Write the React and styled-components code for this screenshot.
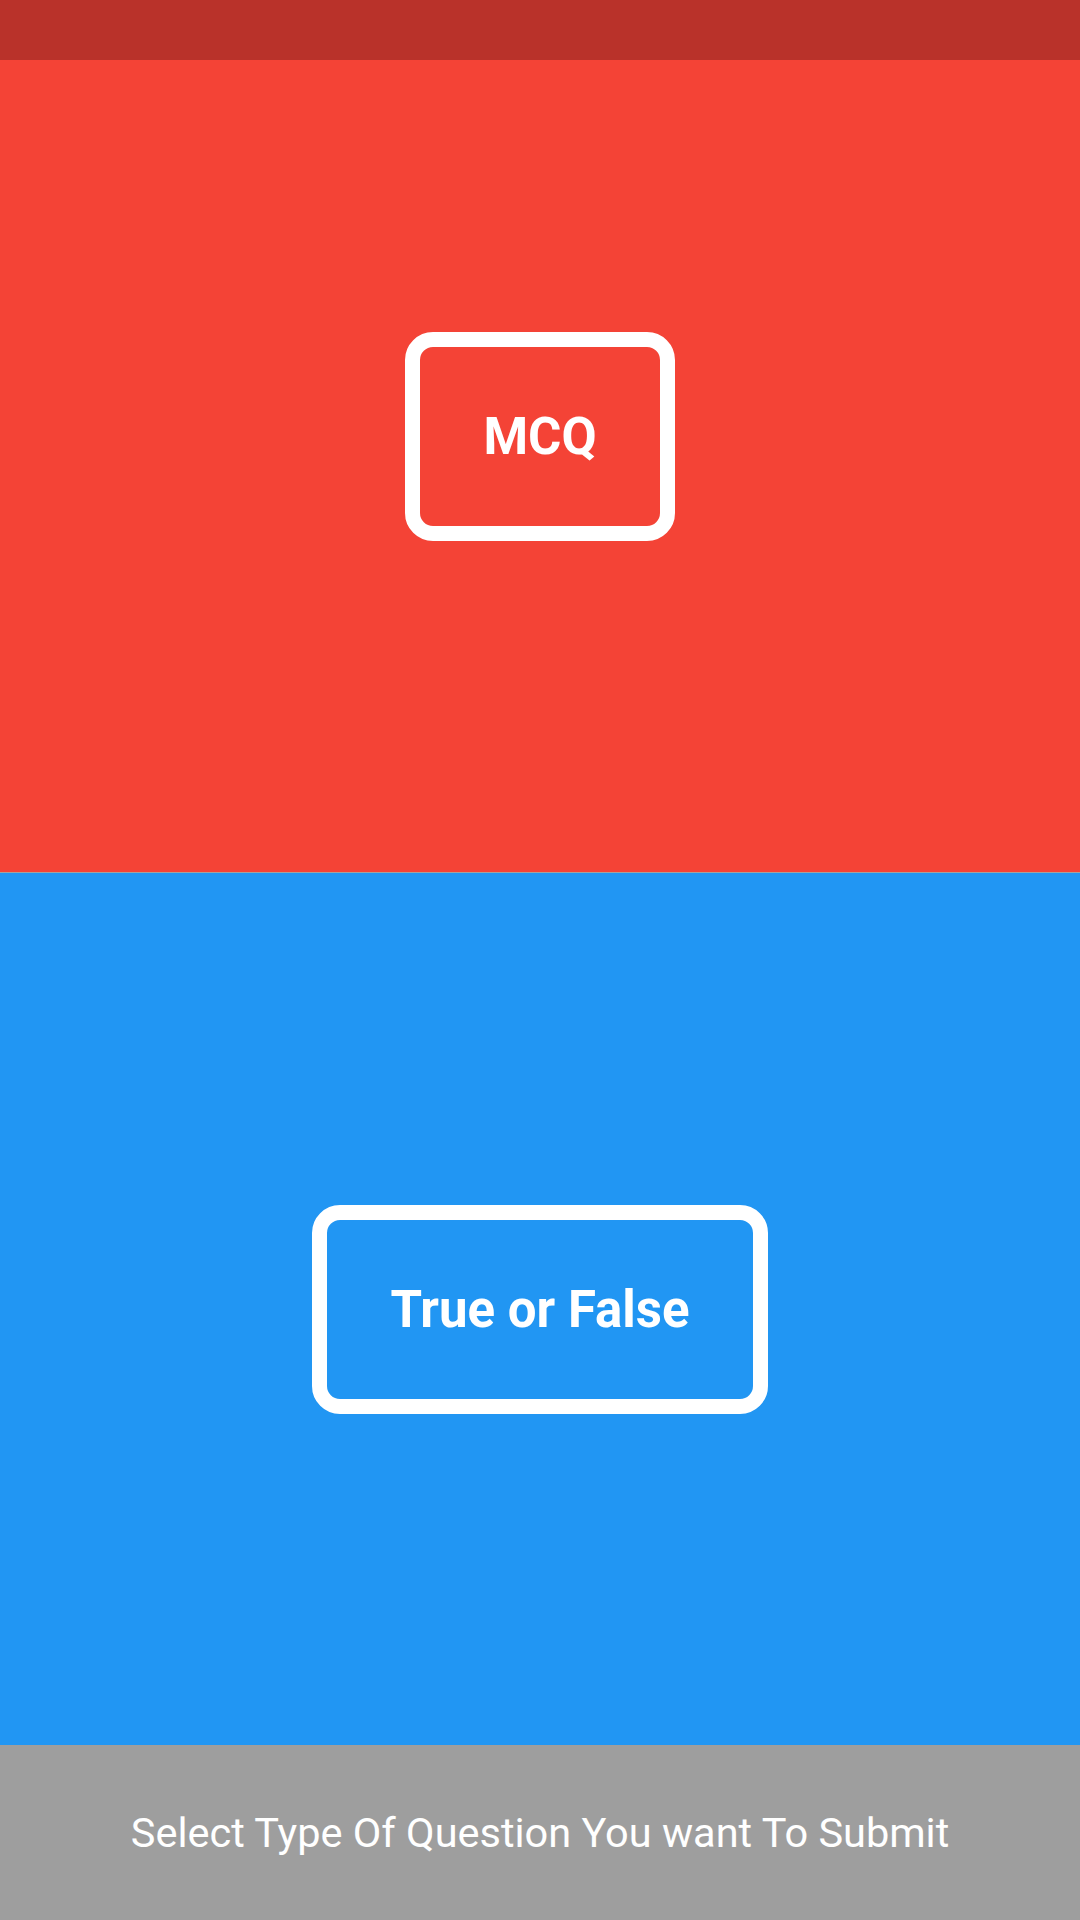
import React from 'react';
import styled, { createGlobalStyle } from 'styled-components';

const GlobalStyle = createGlobalStyle`
    html, body {
        margin: 0;
        padding: 0;
    }

    body {
        font-family: Roboto, "Liberation Sans", sans-serif;
    }
`;

const Screen = styled.div`
    position: relative;
    width: 1080px;
    height: 1920px;
    display: flex;
    flex-direction: column;
    overflow: hidden;
`;

const StatusBar = styled.div`
    position: absolute;
    top: 0;
    left: 0;
    right: 0;
    height: 60px;
    background: #b9322a;
`;

const Panel = styled.section`
    flex: 1;
    display: flex;
    align-items: center;
    justify-content: center;
    background: ${ props => props.colour };
    border-bottom: ${ props => props.divider ? '1px solid #a3a3a3' : 'none' };
`;

const TypeButton = styled.button`
    padding: 57px 63px;
    border: 15px solid #ffffff;
    border-radius: 28px;
    background: transparent;
    color: #ffffff;
    font-family: Roboto, "Liberation Sans", sans-serif;
    font-size: 51px;
    font-weight: 700;
    line-height: 65px;
    cursor: pointer;
`;

const Footer = styled.footer`
    height: 175px;
    flex-shrink: 0;
    display: flex;
    align-items: center;
    justify-content: center;
    background: #9e9e9e;
    color: #ffffff;
    font-size: 41.5px;
    font-weight: 400;
`;

export default function App() {
    return (
        <Screen>
            <GlobalStyle />
            <Panel colour={ '#f44336' } divider={ true }>
                <TypeButton>MCQ</TypeButton>
            </Panel>
            <Panel colour={ '#2196f3' }>
                <TypeButton>True or False</TypeButton>
            </Panel>
            <Footer>Select Type Of Question You want To Submit</Footer>
            <StatusBar />
        </Screen>
    );
}
